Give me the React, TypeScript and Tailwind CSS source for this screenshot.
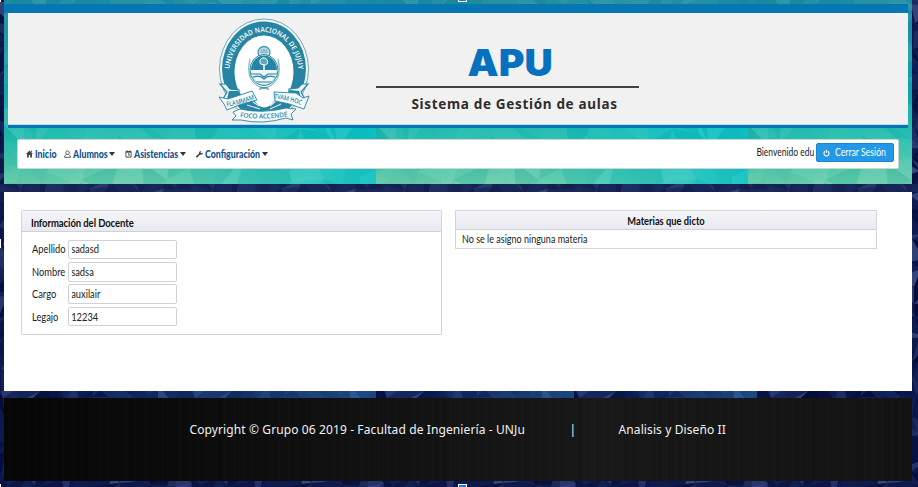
import React from "react";

type Facet = { points: string; fill: string; opacity: number };

// Deterministic low-poly mesh of irregular triangles.
function mesh(w: number, h: number, step: number, colors: string[], seed: number): Facet[] {
  let s = seed;
  const rnd = () => {
    s = (s * 1103515245 + 12345) % 2147483648;
    return s / 2147483648;
  };
  const cols = Math.ceil(w / step) + 1;
  const rows = Math.ceil(h / step) + 1;
  const pts: number[][][] = [];
  for (let r = 0; r <= rows; r++) {
    const line: number[][] = [];
    for (let c = 0; c <= cols; c++) {
      line.push([Math.round((c - 0.5 + (rnd() - 0.5) * 0.9) * step), Math.round((r - 0.5 + (rnd() - 0.5) * 0.9) * step)]);
    }
    pts.push(line);
  }
  const out: Facet[] = [];
  for (let r = 0; r < rows; r++) {
    for (let c = 0; c < cols; c++) {
      const a = pts[r][c];
      const b = pts[r][c + 1];
      const d = pts[r + 1][c];
      const e = pts[r + 1][c + 1];
      for (const t of rnd() > 0.5 ? [[a, b, d], [b, e, d]] : [[a, b, e], [a, e, d]]) {
        out.push({
          points: t.map((p) => p.join(",")).join(" "),
          fill: colors[Math.floor(rnd() * colors.length)],
          opacity: 0.15 + rnd() * 0.75,
        });
      }
    }
  }
  return out;
}

const navyFacets = mesh(192, 487, 14, ["#050a3a", "#0f1c52", "#1b2a62", "#2c3c74", "#122560", "#040a30", "#3a4e84", "#0a154c"], 71);
const tealFacets = mesh(372, 184, 25, ["#ffffff", "#006f86", "#c9ffe0", "#008f90"], 19);

function NavyBackdrop() {
  return (
    <svg className="absolute inset-0" width="918" height="487" aria-hidden="true">
      <defs>
        <pattern id="navy" width="192" height="487" patternUnits="userSpaceOnUse">
          <rect width="192" height="487" fill="#0b1648" />
          {navyFacets.map((f, i) => (
            <polygon key={i} points={f.points} fill={f.fill} opacity={f.opacity} />
          ))}
        </pattern>
        <linearGradient id="glow">
          <stop offset="0" stopColor="#1c5192" stopOpacity="0" />
          <stop offset="1" stopColor="#2769a8" stopOpacity="0.6" />
        </linearGradient>
      </defs>
      <rect width="918" height="487" fill="url(#navy)" />
      <rect y="184" width="918" height="8" fill="#31447c" opacity="0.3" />
      {[4, 376, 574].map((x, i) => (
        <rect key={x} x={x} y="391" width={[372, 198, 183][i]} height="7" fill="url(#glow)" />
      ))}
    </svg>
  );
}

function TealBackdrop() {
  return (
    <svg className="absolute inset-0" width="908" height="184" aria-hidden="true">
      <defs>
        <linearGradient id="tealBase" x1="0" y1="0" x2="0" y2="1">
          <stop offset="0" stopColor="#1c8ba0" />
          <stop offset="0.5" stopColor="#10a5a8" />
          <stop offset="0.74" stopColor="#20bcae" />
          <stop offset="1" stopColor="#66cba8" />
        </linearGradient>
        <linearGradient id="cyan">
          <stop offset="0.4" stopColor="#00c0c8" stopOpacity="0" />
          <stop offset="1" stopColor="#08c2c8" stopOpacity="0.85" />
        </linearGradient>
        <pattern id="teal" width="372" height="184" patternUnits="userSpaceOnUse">
          <rect width="372" height="184" fill="url(#tealBase)" />
          <rect y="100" width="372" height="84" fill="url(#cyan)" />
          <g opacity="0.12">
            {tealFacets.map((f, i) => (
              <polygon key={i} points={f.points} fill={f.fill} opacity={f.opacity} />
            ))}
          </g>
        </pattern>
      </defs>
      <rect width="908" height="184" fill="url(#teal)" />
    </svg>
  );
}

function Crest() {
  return (
    <svg width="94" height="106" viewBox="0 0 94 106" aria-label="Universidad Nacional de Jujuy">
      <defs>
        <path id="arc" d="M12.5 56 A34.5 41 0 0 1 81.5 56" />
        <path id="ribbonLeft" d="M10 89.5 Q22 88 39 81.5" />
        <path id="ribbonRight" d="M57 81.5 Q71 83 86 88.5" />
        <path id="ribbonBottom" d="M23 100 Q46 103.5 72 99" />
        <clipPath id="shield">
          <ellipse cx="47" cy="53" rx="13" ry="14.5" />
        </clipPath>
      </defs>
      <ellipse cx="47" cy="52" rx="44.5" ry="50" fill="#f8fafa" stroke="#5aa0b5" strokeWidth="0.9" />
      <ellipse cx="47" cy="52" rx="42" ry="47.5" fill="#2785a3" />
      <ellipse cx="47" cy="55" rx="29.5" ry="36.5" fill="#fff" />
      <g fontFamily="Noto Sans, sans-serif" fontWeight="600" fontSize="7" fill="#eef8fa">
        <text>
          <textPath href="#arc" startOffset="4" textLength="111" lengthAdjust="spacingAndGlyphs">UNIVERSIDAD NACIONAL DE JUJUY</textPath>
        </text>
      </g>
      <circle cx="47" cy="35.5" r="6" fill="#c3dee5" stroke="#4898b0" strokeWidth="1.3" />
      <path d="M43 36a4 4 0 0 1 8 0z" fill="#8dbfcc" />
      <path d="M33 42 Q30 55 34 62 Q39 70 47 71 Q55 70 60 62 Q64 55 61 42" fill="none" stroke="#7fb8c8" strokeWidth="1.2" />
      <ellipse cx="47" cy="53" rx="14" ry="15.5" fill="#fff" stroke="#2785a3" strokeWidth="1" />
      <g clipPath="url(#shield)">
        <rect x="30" y="32" width="34" height="42" fill="#2785a3" />
        <rect x="30" y="53" width="34" height="22" fill="#eff7f9" />
        <path d="M33 57 H43 L47 60 51 57 H61 M34 61 Q42 57 47 62 Q52 57 60 61 M38 65 H56" stroke="#2785a3" strokeWidth="1.2" fill="none" />
        <path d="M47 53 V45" stroke="#fff" strokeWidth="1.5" />
        <path d="M43.5 47 Q41.5 42 46 40.8 Q51.5 41 50.5 46.5 L48.5 48z" fill="#5fa9bb" stroke="#fff" strokeWidth="1" />
      </g>
      <path d="M43 73 Q43 69 47 71 Q51 69 51 73 M44 71 l6 0" fill="none" stroke="#4898b0" strokeWidth="1.3" />
      <path d="M3 67 L10 75 L6 82 L22 84 L22 73 L13 72 L9 67z M91 67 L84 75 L88 82 L72 82 L72 72 L81 71 L85 67z" fill="#e9f3f5" stroke="#2785a3" strokeWidth="1.2" />
      <path d="M12 74 L21 74 25 80 L10 82z M82 74 L73 73 69 79 L84 81z" fill="#2785a3" />
      <path d="M20 88 L37 83 Q47 98 58 83 L75 88 L69 95 H26z" fill="#2785a3" />
      <path d="M30 88 L43 92 M64 87 L53 92 M36 85 L42 89 M59 84 L53 89" stroke="#dceef1" strokeWidth="1.1" />
      <path d="M2 80 L11 82 L35 74 L40 83 Q22 87 10 93 L7 87z" fill="#f5f9fa" stroke="#2785a3" strokeWidth=".9" />
      <path d="M57 75 L79 76 L86 81 L92 79 L87 92 Q72 86 58 84z" fill="#f5f9fa" stroke="#2785a3" strokeWidth=".9" />
      <path d="M16 95 L23 92 Q46 97 69 91 L79 92 L74 97 L76 103 L69 101 Q45 108 24 103 L15 103 L19 99z" fill="#f5f9fa" stroke="#2785a3" strokeWidth=".9" />
      <g fontFamily="Noto Sans, sans-serif" fontSize="6.6" fontWeight="500" fill="#2785a3">
        <text><textPath href="#ribbonLeft" textLength="29" lengthAdjust="spacingAndGlyphs">FLAMMAM</textPath></text>
        <text><textPath href="#ribbonRight" textLength="28" lengthAdjust="spacingAndGlyphs">TVAM HOC</textPath></text>
        <text><textPath href="#ribbonBottom" textLength="48" lengthAdjust="spacingAndGlyphs">FOCO ACCENDE</textPath></text>
      </g>
    </svg>
  );
}

function HomeIcon() {
  return (
    <svg className="shrink-0" width="7" height="8" viewBox="0 0 7 8" fill="#444">
      <path d="M3.5 .5 0 4h1v3.5h1.8V5h1.4v2.5H6V4h1zM5 .8h1v1.5L5 1.4z" />
    </svg>
  );
}
function PersonIcon() {
  return (
    <svg className="shrink-0" width="7" height="8" viewBox="0 0 7 8" fill="none" stroke="#555" strokeWidth=".9">
      <circle cx="3.5" cy="2.7" r="1.8" />
      <path d="M2.5 4.5 .6 6v1.4h5.8V6L4.5 4.5" />
    </svg>
  );
}
function CalendarIcon() {
  return (
    <svg className="shrink-0" width="7" height="8" viewBox="0 0 7 8" fill="none" stroke="#444" strokeWidth=".9">
      <path d="M.9 1.5h5.2v5.6H.9zM1 2.2h5M2 .3v1.4M5 .3v1.4M3 3.7h1V6" />
    </svg>
  );
}
function WrenchIcon() {
  return (
    <svg className="shrink-0" width="7" height="8" viewBox="0 0 7 8" fill="#333">
      <path d="M0 6.4 3.1 3.6C2.8 2 4 .7 5.5 1L4.4 2.1l.5 1.1 1.1.1L7 2.4C7 4 5.7 5 4.1 4.6L1.1 7.5Q-.2 7.5 0 6.4" />
    </svg>
  );
}
const Caret = () => <span className="ml-[2px] h-0 w-0 border-x-[3px] border-t-[4px] border-x-transparent border-t-[#333]" />;

const menu = [
  { label: "Inicio", Icon: HomeIcon, caret: false, slot: "w-[38px]", text: "w-[21px]" },
  { label: "Alumnos", Icon: PersonIcon, caret: true, slot: "w-[61px]", text: "w-[34px]" },
  { label: "Asistencias", Icon: CalendarIcon, caret: true, slot: "w-[71px]", text: "w-[44.5px]" },
  { label: "Configuración", Icon: WrenchIcon, caret: true, slot: "w-[76px]", text: "w-[55px]" },
];

const fields = [
  ["Apellido", "sadasd"],
  ["Nombre", "sadsa"],
  ["Cargo", "auxilair"],
  ["Legajo", "12234"],
];

export default function App() {
  return (
    <div className="relative h-[487px] w-[918px] overflow-hidden bg-[#071040] font-['Lato','Liberation_Sans',sans-serif] text-[10.6px] text-[#222]">
      <NavyBackdrop />
      <div className="relative ml-1 flex w-[908px] flex-col">
        <header className="relative h-[184px] pt-1">
          <TealBackdrop />
          <div className="relative flex h-[124px] flex-col">
            <div className="h-[9px] w-[904px] bg-[#0577b5]" />
            <div className="ml-1 flex h-[112px] w-[900px] border-b border-[#b9ddea] bg-[#f1f1f1] pl-[209px] pt-1">
              <Crest />
              <div className="ml-[65px] flex w-[263px] flex-col items-center">
                <div className="mt-[23px] flex h-[48px] w-full shrink-0 items-center justify-center border-b-2 border-[#484043] pb-[1px] pl-[6px] font-['Inter','Noto_Sans',sans-serif] text-[37px] leading-none font-black text-[#0871bf]">
                  <span className="origin-center scale-x-[1.06]">APU</span>
                </div>
                <div className="mt-[6px] ml-[14px] font-['Noto_Sans',sans-serif] text-[13.5px] leading-[20px] font-bold tracking-[0.67px] whitespace-nowrap text-[#2f2d2e]">
                  Sistema de Gestión de aulas
                </div>
              </div>
            </div>
            <div className="ml-1 h-[3px] w-[900px] bg-[#0577b5]" />
          </div>
          <div className="relative mt-[11px] ml-[13px] flex h-[30px] w-[882px] items-center justify-between rounded-[2px] border border-[#cfd5d5] bg-white pr-1 pl-2">
            <nav className="flex items-center pt-px font-black text-[#105591]">
              {menu.map(({ label, Icon, caret, slot, text }) => (
                <a key={label} className={`flex items-center ${slot}`}>
                  <Icon />
                  <span className={`ml-[1.5px] shrink-0 whitespace-nowrap ${text}`}>
                    <span className="inline-block origin-left scale-x-[0.83]">{label}</span>
                  </span>
                  {caret && <Caret />}
                </a>
              ))}
            </nav>
            <div className="flex items-center pb-[3px]">
              <span className="mr-[2px] origin-right scale-x-[0.8] whitespace-nowrap">Bienvenido edu</span>
              <button className="flex h-[19px] w-[78px] items-center rounded-[2px] border border-[#1d86cd] bg-[#2398e6] pl-[6px] text-white">
                <svg className="shrink-0" width="7" height="8" viewBox="0 0 7 8" fill="none" stroke="#fff" strokeWidth="1.1">
                  <path d="M2 2.3A2.6 2.6 0 1 0 5 2.3M3.5 .8V4" />
                </svg>
                <span className="ml-[5px] origin-left scale-x-[0.82] whitespace-nowrap">Cerrar Sesión</span>
              </button>
            </div>
          </div>
        </header>

        <main className="mt-2 flex h-[199px] items-start gap-[13px] bg-white pt-[18px] pl-[17px]">
          <section className="h-[125px] w-[421px] rounded-[2px] border border-[#d5d5d9] border-b-[#d0d0d4]">
            <h2 className="h-[21px] border-b border-[#cfd1d6] bg-linear-to-b from-[#f5f5f9] to-[#e9eaef] pl-[9px] leading-[24px] font-bold text-[#111]">
              <span className="inline-block origin-left scale-x-[0.9] tracking-[-0.1px]">Información del Docente</span>
            </h2>
            <div className="flex flex-col gap-[2.7px] pt-[7.5px] pl-[10px]">
              {fields.map(([label, value]) => (
                <label key={label} className="flex items-center">
                  <span className="w-[36px] pt-[2px] whitespace-nowrap">
                    <span className="inline-block origin-left scale-x-[0.88]">{label}</span>
                  </span>
                  <span className="flex h-[19.7px] w-[109px] items-center rounded-[2px] border border-[#d2d2d6] bg-white">
                    <input
                      readOnly
                      value={value}
                      className="w-[115px] origin-left scale-x-[0.88] bg-transparent pt-[2px] pl-[2.5px] text-[10.6px] text-[#222] outline-none"
                    />
                  </span>
                </label>
              ))}
            </div>
          </section>
          <section className="h-[39px] w-[422px] border border-[#d5d5d9]">
            <h2 className="h-[19px] border-b border-[#cfd1d6] bg-linear-to-b from-[#f5f5f9] to-[#e9eaef] text-center leading-[20px] font-bold text-[#111]">
              <span className="inline-block scale-x-[0.88]">Materias que dicto</span>
            </h2>
            <p className="pl-[6px] leading-[18px]">
              <span className="inline-block origin-left scale-x-[0.85]">No se le asigno ninguna materia</span>
            </p>
          </section>
        </main>

        <footer className="mt-[7px] h-[83px] bg-[repeating-linear-gradient(90deg,transparent_0px,transparent_4px,#ffffff03_5px,transparent_7px,#00000010_9px),linear-gradient(90deg,#060606,#111111_40%,#181818_65%,#131313)] pt-[22px] pl-[185.5px] font-['Noto_Sans','DejaVu_Sans',sans-serif] text-[12px] leading-[19px] text-[#f1f1f1]">
          <div className="flex tracking-[0.11px] whitespace-nowrap">
            <span className="w-[380px]">Copyright © Grupo 06 2019 - Facultad de Ingeniería - UNJu</span>
            <span className="w-[49px]">|</span>
            <span>Analisis y Diseño II</span>
          </div>
        </footer>
      </div>
      <i className="absolute top-0 left-0 h-[2px] w-[1px] bg-white" />
      <i className="absolute top-[-7px] left-[458px] h-[9px] w-[9px] border border-white bg-[#2376d9]" />
      <i className="absolute top-[239px] left-[-8px] h-[9px] w-[9px] border border-white bg-[#2376d9]" />
      <i className="absolute top-[484px] left-[458px] h-[9px] w-[9px] border border-white bg-[#2376d9]" />
      <i className="absolute top-[484px] left-0 h-[3px] w-[1px] bg-white" />
    </div>
  );
}
